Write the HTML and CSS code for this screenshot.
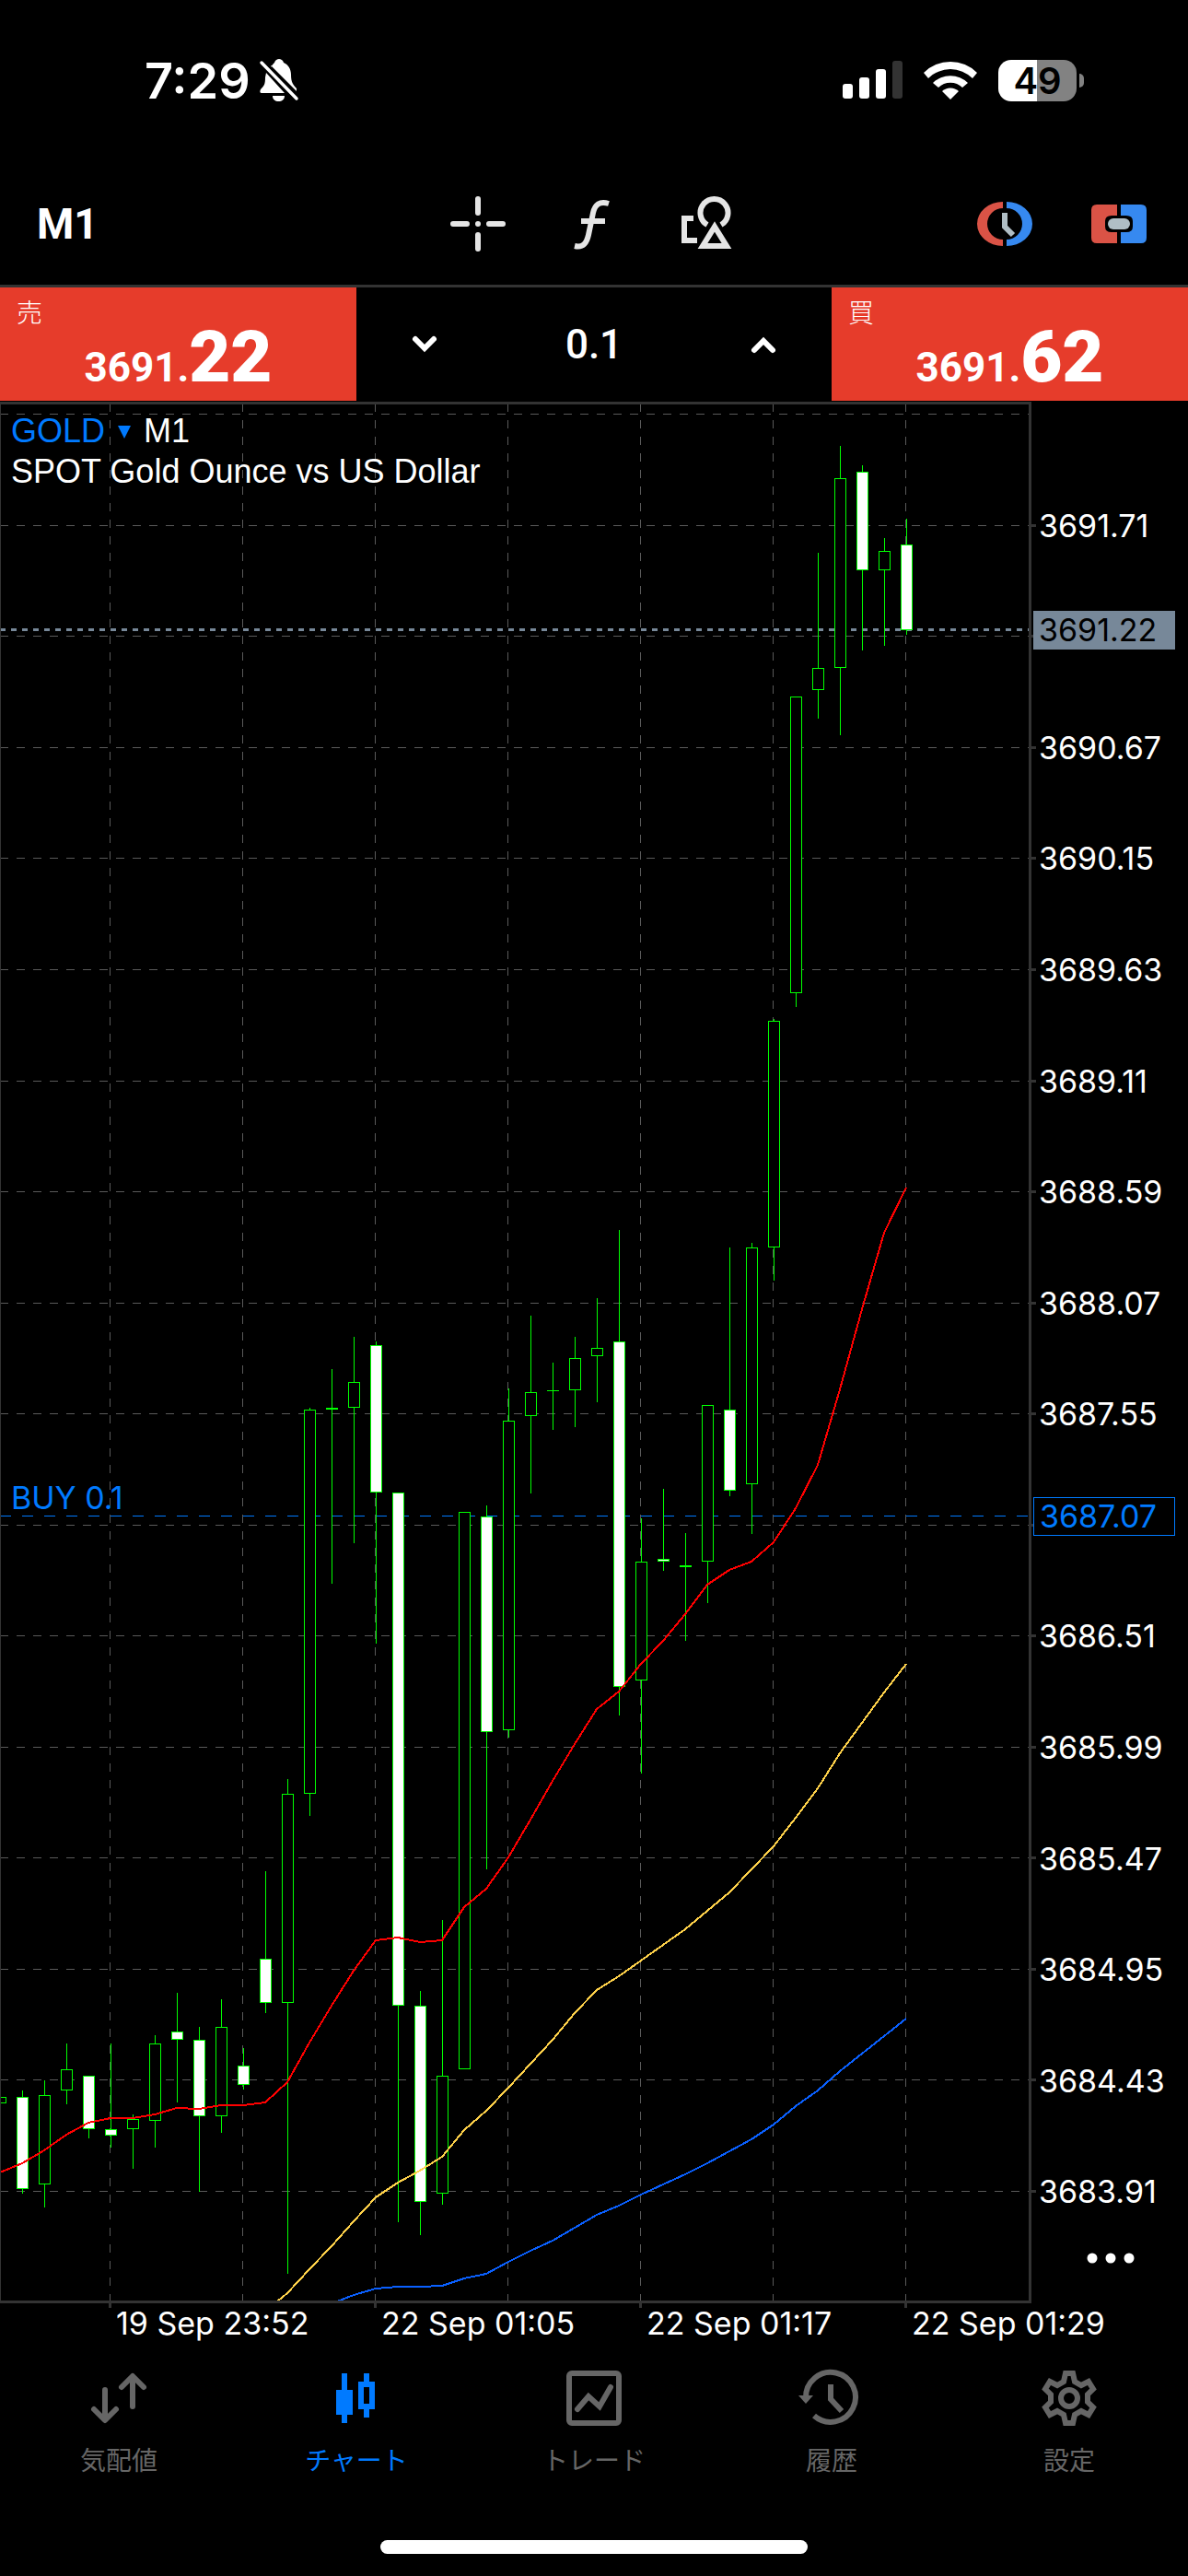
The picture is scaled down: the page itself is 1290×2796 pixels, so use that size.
FILE: index.html
```html
<!DOCTYPE html>
<html lang="ja">
<head>
	<meta charset="utf-8">
	<meta name="viewport" content="width=device-width, initial-scale=1.0">
	<title>GOLD M1</title>
	<link rel="stylesheet" href="styles.css">
</head>
<body>
	<div class="status">
		<div class="status-left">
			<span class="time">7:29</span>
			<svg class="bell" viewBox="0 0 42 46" width="42" height="46">
				<path fill="#fff" d="M12 9C14 6 15 5 16 4C17 1 19 0 21 0C23 0 25 1 26 4C31 6 34 11 34 17C34 25 36 28 40 32V35L12 7ZM7 15L27 37H2C0 37 0 35 1 33C5 29 6 27 6 20ZM14 40H27C27 44 24 46 20.500 46C17 46 14 44 14 40Z"/>
				<path stroke="#fff" stroke-width="3.500" stroke-linecap="round" d="M2 4L40 43"/>
			</svg>
		</div>
		<div class="status-right">
			<svg viewBox="0 0 65 42" width="65" height="42" fill="#fff">
				<rect x="0" y="25" width="11" height="16" rx="3"/>
				<rect x="18" y="18" width="11" height="23" rx="3"/>
				<rect x="36" y="9" width="11" height="32" rx="3"/>
				<rect x="54" y="0" width="11" height="41" rx="3" fill="#333"/>
			</svg>
			<svg viewBox="0 0 58 42" width="58" height="42" fill="#fff">
				<path d="M0 13A41 41 0 0 1 58 13L53 19A34 34 0 0 0 5 19Z"/>
				<path d="M10 24A27 27 0 0 1 48 24L42 29A19 19 0 0 0 16 29Z"/>
				<path d="M20 33A13 13 0 0 1 38 33L29 42Z"/>
			</svg>
			<div class="battery"><span>49</span></div>
		</div>
	</div>

	<header class="toolbar">
		<button class="period">M1</button>
		<div class="tools">
			<button aria-label="Crosshair">
				<svg viewBox="0 0 60 60" width="60" height="60" stroke="#e5e5e5" stroke-width="6" stroke-linecap="round">
					<path d="M30 3V18M30 42V57M3 30H18M42 30H57M30 30V30.100"/>
				</svg>
			</button>
			<button aria-label="Indicators">
				<svg viewBox="0 0 60 60" width="60" height="60" fill="none" stroke="#e5e5e5" stroke-width="6">
					<path d="M11 54C20 56 24 51 26 42L31 18C33 9 38 5 48 8M18 27H44"/>
				</svg>
			</button>
			<button aria-label="Objects">
				<svg viewBox="0 0 60 60" width="60" height="60" fill="none" stroke="#e5e5e5" stroke-width="6">
					<path d="M16 24H6V48H20M31 31A15 15 0 1 1 46 31M39 33L52 54H26Z"/>
				</svg>
			</button>
		</div>
		<div class="trade-tools">
			<button aria-label="Order">
				<svg viewBox="0 0 60 60" width="60" height="60">
					<path fill="#da5346" d="M28 6A28 24 0 0 0 28 54V47A17 17 0 0 1 28 13Z"/>
					<path fill="#3689f0" d="M32 6A28 24 0 0 1 32 54V47A17 17 0 0 0 32 13Z"/>
					<path fill="none" stroke="#b0bec5" stroke-width="6" d="M30 18V33L39 42"/>
				</svg>
			</button>
			<button aria-label="One click trading">
				<svg viewBox="0 0 60 60" width="60" height="60">
					<path fill="#da5346" d="M6 9H28V21H22Q15 21 15 27V33Q15 39 22 39H28V51H6Q0 51 0 45V15Q0 9 6 9Z"/>
					<path fill="#3689f0" d="M54 9H32V21H38Q45 21 45 27V33Q45 39 38 39H32V51H54Q60 51 60 45V15Q60 9 54 9Z"/>
					<rect fill="#b0bec5" x="18" y="24" width="24" height="12" rx="6"/>
				</svg>
			</button>
		</div>
	</header>

	<div class="order">
		<button class="deal">
			<span class="side">売</span>
			<span class="price">3691.<b>22</b></span>
		</button>
		<div class="volume">
			<button aria-label="Less">
				<svg viewBox="0 0 28 20" width="28" height="20" fill="none" stroke="#fff" stroke-width="6" stroke-linecap="round"><path d="M4 4L14 14L24 4"/></svg>
			</button>
			<input type="text" value="0.1" aria-label="Volume">
			<button aria-label="More">
				<svg viewBox="0 0 28 20" width="28" height="20" fill="none" stroke="#fff" stroke-width="6" stroke-linecap="round"><path d="M4 16L14 6L24 16"/></svg>
			</button>
		</div>
		<button class="deal">
			<span class="side">買</span>
			<span class="price">3691.<b>62</b></span>
		</button>
	</div>

	<main class="chart">
		<div class="plot">
			<svg id="plot" viewBox="0 436 1126 2069" shape-rendering="crispEdges"></svg>
			<div class="symbol">
				<button>GOLD <svg viewBox="0 0 14 14" width="14" height="14"><path fill="#007aff" d="M0 0H14L7 14Z"/></svg></button> M1<br>
				SPOT Gold Ounce vs US Dollar
			</div>
			<div class="position">BUY 0.1</div>
		</div>
		<div class="axis">
			<ol class="prices">
				<li>3691.71</li>
				<li></li>
				<li>3690.67</li>
				<li>3690.15</li>
				<li>3689.63</li>
				<li>3689.11</li>
				<li>3688.59</li>
				<li>3688.07</li>
				<li>3687.55</li>
				<li></li>
				<li>3686.51</li>
				<li>3685.99</li>
				<li>3685.47</li>
				<li>3684.95</li>
				<li>3684.43</li>
				<li>3683.91</li>
			</ol>
			<button class="more" aria-label="Menu">
				<svg viewBox="0 0 52 12" width="52" height="12" fill="#fff"><circle cx="6" cy="6" r="5.500"/><circle cx="26" cy="6" r="5.500"/><circle cx="46" cy="6" r="5.500"/></svg>
			</button>
			<div class="tag bid">3691.22</div>
			<div class="tag open">3687.07</div>
		</div>
	</main>
	<div class="dates">
		<span>19 Sep 23:52</span>
		<span>22 Sep 01:05</span>
		<span>22 Sep 01:17</span>
		<span>22 Sep 01:29</span>
	</div>

	<nav class="tabs">
		<a href="#quotes">
			<svg viewBox="0 0 60 60" width="60" height="60" fill="none" stroke="currentColor" stroke-width="6" stroke-linecap="round" stroke-linejoin="round">
				<path d="M15 21V53M3 42L15 54L27 42M45 39V7M33 18L45 6L57 18"/>
			</svg>
			気配値
		</a>
		<a href="#chart" class="active">
			<svg viewBox="0 0 60 60" width="60" height="60" fill="currentColor">
				<path fill-rule="evenodd" d="M14 3H20V21H26V48H20V57H14V48H8V21H14ZM38 3H44V12H50V42H44V51H38V42H32V12H38ZM38 18V36H44V18Z"/>
			</svg>
			チャート
		</a>
		<a href="#trade">
			<svg viewBox="0 0 60 60" width="60" height="60" fill="none" stroke="currentColor" stroke-width="6" stroke-linecap="round">
				<rect x="3" y="3" width="54" height="54" rx="3"/>
				<path d="M12 42L24 28L36 39L48 18"/>
			</svg>
			トレード
		</a>
		<a href="#history">
			<svg viewBox="0 0 60 60" width="60" height="60" fill="none" stroke="currentColor" stroke-width="6">
				<path d="M2 30A27 27 0 1 1 11 49M29 15V31L41 44"/>
				<path fill="currentColor" stroke="none" d="M-6 27H10L2 36Z"/>
			</svg>
			履歴
		</a>
		<a href="#settings">
			<svg viewBox="0 0 60 60" width="60" height="60" fill="none" stroke="currentColor" stroke-width="6">
				<path d="M26 3H34L36 12L43 16L51 12L56 20L50 26V34L56 40L51 48L43 44L36 48L34 57H26L24 48L17 44L9 48L4 40L10 34V26L4 20L9 12L17 16L24 12Z"/>
				<circle cx="30" cy="30" r="9"/>
			</svg>
			設定
		</a>
	</nav>
	<div class="home"></div>

	<script>
		var svg = document.getElementById("plot");
		var out = "";
		var step = 24;

		// high, body top, body bottom, low, down candle
		var candles = [
			[2276,2276,2282,2282,0],[2269,2276,2375,2380,1],[2258,2274,2370,2395,0],[2218,2246,2268,2283,0],
			[2253,2253,2310,2320,1],[2218,2311,2317,2330,1],[2295,2300,2310,2353,0],[2209,2218,2301,2330,0],
			[2163,2205,2213,2281,1],[2200,2214,2296,2378,1],[2170,2200,2296,2314,0],[2223,2242,2262,2267,1],
			[2031,2126,2173,2184,1],[1931,1947,2173,2467,0],[1528,1530,1946,1970,0],[1486,1528,1529,1718,0],
			[1451,1500,1527,1674,0],[1456,1460,1619,1783,1],[1620,1620,2176,2411,1],[2161,2177,2389,2425,1],
			[2084,2253,2380,2392,0],[1641,1641,2245,2245,0],[1634,1646,1879,2028,1],[1507,1542,1877,1885,0],
			[1428,1511,1536,1620,0],[1479,1509,1509,1551,0],[1451,1474,1508,1548,0],[1409,1463,1471,1521,0],
			[1335,1456,1830,1861,1],[1648,1695,1823,1924,0],[1616,1692,1694,1704,1],[1664,1699,1700,1780,0],
			[1525,1525,1694,1739,0],[1354,1530,1617,1623,1],[1349,1354,1610,1664,0],[1106,1108,1353,1389,0],
			[756,756,1077,1092,0],[600,725,748,779,0],[484,519,724,797,0],[505,512,618,705,1],
			[584,598,618,700,0],[563,591,683,688,1]
		];

		// moving averages, first is the index of the first candle
		var averages = [
			{color: "#ff0000", first: 0, start: "", y: [2358,2348,2334,2317,2304,2299,2299,2295,2288,2289,2285,2285,2282,2260,2217,2177,2139,2106,2103,2108,2106,2070,2050,2016,1975,1933,1893,1855,1836,1806,1781,1752,1720,1704,1695,1674,1637,1590,1508,1421,1338,1289]},
			{color: "#ffd24a", first: 13, start: "301,2498 ", y: [2489,2463,2438,2411,2385,2369,2356,2341,2312,2291,2266,2240,2214,2185,2160,2145,2128,2111,2094,2074,2054,2029,2004,1973,1941,1903,1870,1837,1806]},
			{color: "#0a60ff", first: 16, start: "366,2498 ", y: [2491,2484,2482,2482,2481,2473,2468,2455,2443,2432,2418,2404,2394,2382,2371,2360,2348,2335,2322,2306,2286,2269,2248,2229,2210,2191]}
		];

		function line(x1, y1, x2, y2, color, width, dash){
			out += '<path d="M' + x1 + ' ' + y1 + 'L' + x2 + ' ' + y2 + '" stroke="' + color + '" stroke-width="' + width + '"' + (dash ? ' stroke-dasharray="' + dash + '"' : '') + '/>';
		}

		// grid
		for(var i = 0; i < 17; i++){
			var gy = Math.floor(449.7 + i * 120.55) + 0.5;
			line(0, gy, 1117, gy, "#5a5a5a", 1, 9);
			if (i > 0){
				line(1120, gy, 1125, gy, "#333", 3);
			}
		}
		for(var i = 0; i < 7; i++){
			var gx = 119.5 + i * 144;
			line(gx, 438, gx, 2497, "#5a5a5a", 1, 9);
			if (i % 2 == 0){
				line(gx, 2500, gx, 2505, "#333", 3);
			}
		}

		// open position and bid
		line(0, 1645.5, 1117, 1645.5, "#007aff", 1, 12);
		line(0, 683.5, 1117, 683.5, "#778899", 3, 6);

		for(var k = 0; k < candles.length; k++){
			var c = candles[k];
			var x = k * step + 0.5;
			line(x, c[0], x, c[3] + 1, "#00ff00", 1);
			out += '<rect x="' + (x - 6) + '" y="' + (c[1] + 0.5) + '" width="12" height="' + Math.max(c[2] - c[1], 0.01) + '" fill="' + (c[4] ? "#fff" : "#000") + '" stroke="#00ff00"/>';
		}

		averages.forEach(function(a){
			var points = a.start;
			for(var j = 0; j < a.y.length; j++){
				points += ((a.first + j) * step) + "," + a.y[j] + " ";
			}
			out += '<polyline points="' + points + '" fill="none" stroke="' + a.color + '" stroke-width="2"/>';
		});

		// frame
		line(0.5, 439, 0.5, 2497, "#333", 1);
		line(0, 437.5, 1120, 437.5, "#333", 3);
		line(1118.5, 438, 1118.5, 2500, "#333", 3);
		line(0, 2498.5, 1120, 2498.5, "#333", 3);
		svg.innerHTML = out;
	</script>
</body>
</html>
```
FILE: styles.css
```css
* {
	box-sizing: border-box;
}

body {
	margin: 0;
	min-height: 100vh;
	display: flex;
	flex-direction: column;
	background: #000;
	color: #fff;
	font-family: Inter, "Noto Sans CJK JP", sans-serif;
	font-size: 34px;
}

button {
	padding: 0;
	border: 0;
	background: none;
	color: inherit;
	font: inherit;
	cursor: pointer;
}

svg {
	display: block;
	overflow: visible;
}

.status {
	display: flex;
	justify-content: space-between;
	align-items: center;
	height: 176px;
	padding: 0 113px 2px 157px;
}

.status-left,
.status-right {
	display: flex;
	align-items: center;
}

.status-left {
	gap: 10px;
}

.status-right {
	gap: 23px;
}

.time {
	font-size: 54px;
	font-weight: 600;
}

.battery {
	position: relative;
	display: flex;
	align-items: center;
	justify-content: center;
	width: 85px;
	height: 45px;
	margin-right: 8px;
	border-radius: 14px;
	background: linear-gradient(to right, #fff 49%, #828282 49%);
	color: #000;
	font-size: 40px;
	font-weight: 600;
}

.battery::after {
	content: "";
	position: absolute;
	right: -8px;
	width: 5px;
	height: 15px;
	border-radius: 0 5px 5px 0;
	background: #828282;
}

.toolbar {
	display: grid;
	grid-template-columns: 1fr auto 1fr;
	align-items: center;
	height: 136px;
	padding: 0 45px 0 40px;
	border-bottom: 3px solid #333;
}

.period {
	justify-self: start;
	font-family: Roboto, sans-serif;
	font-size: 46px;
	font-weight: 700;
}

.tools {
	display: flex;
	gap: 64px;
}

.trade-tools {
	display: flex;
	justify-content: flex-end;
	gap: 64px;
}

.order {
	display: grid;
	grid-template-columns: 3fr 4fr 3fr;
	height: 124px;
	padding-bottom: 1px;
	font-family: Roboto, sans-serif;
	font-weight: 700;
}

.deal {
	position: relative;
	display: flex;
	justify-content: center;
	align-items: flex-end;
	background: #e63c2b;
}

.side {
	position: absolute;
	left: 18px;
	top: 8px;
	font-family: "Noto Sans CJK JP", sans-serif;
	font-size: 28px;
	font-weight: 300;
	line-height: 36px;
}

.price {
	font-size: 44px;
	line-height: 72px;
}

.price b {
	font-size: 78px;
}

.volume {
	display: flex;
	justify-content: space-between;
	align-items: center;
	padding: 0 60px;
}

.volume input {
	width: 120px;
	padding: 0;
	border: 0;
	background: none;
	color: #fff;
	font: inherit;
	font-size: 44px;
	font-weight: 500;
	text-align: center;
}

.chart {
	display: flex;
}

.plot {
	position: relative;
	flex: 1;
}

.symbol {
	position: absolute;
	left: 12px;
	top: 10px;
	font-family: "Liberation Sans", sans-serif;
	font-size: 36px;
	line-height: 44px;
}

.symbol button {
	color: #007aff;
}

.symbol button svg {
	display: inline-block;
	margin: 0 4px 4px;
}

.position {
	position: absolute;
	left: 12px;
	bottom: 42%;
	color: #007aff;
	font-size: 34px;
	line-height: 20px;
}

.axis {
	position: relative;
	display: flex;
	flex-direction: column;
	width: 164px;
	padding-top: 74px;
}

.prices {
	flex: 1;
	display: grid;
	grid-template-rows: repeat(16, 1fr);
	align-items: center;
	margin: 0;
	padding: 0 0 0 2px;
	list-style: none;
}

.more {
	display: flex;
	justify-content: center;
	height: 66px;
	padding: 6px 4px 0 0;
}

.tag {
	position: absolute;
	left: -4px;
	min-width: 154px;
	height: 42px;
	padding: 0 6px;
	line-height: 42px;
	transform: translateY(-50%);
}

.bid {
	top: 12%;
	background: #778899;
	color: #000;
}

.open {
	top: 58.5%;
	border: 1px solid #007aff;
	background: #000;
	color: #007aff;
	line-height: 40px;
}

.dates {
	display: flex;
	padding-left: 126px;
	line-height: 34px;
	white-space: nowrap;
}

.dates span {
	width: 288px;
}

.tabs {
	display: grid;
	grid-template-columns: repeat(5, 1fr);
	margin-top: 34px;
}

.tabs a {
	display: flex;
	flex-direction: column;
	align-items: center;
	gap: 16px;
	color: #666;
	font-family: "Noto Sans CJK JP", sans-serif;
	font-size: 28px;
	line-height: 40px;
	text-decoration: none;
}

.tabs .active {
	color: #007aff;
}

.home {
	width: 36%;
	height: 15px;
	margin: auto auto 24px;
	border-radius: 8px;
	background: #fff;
}
```
